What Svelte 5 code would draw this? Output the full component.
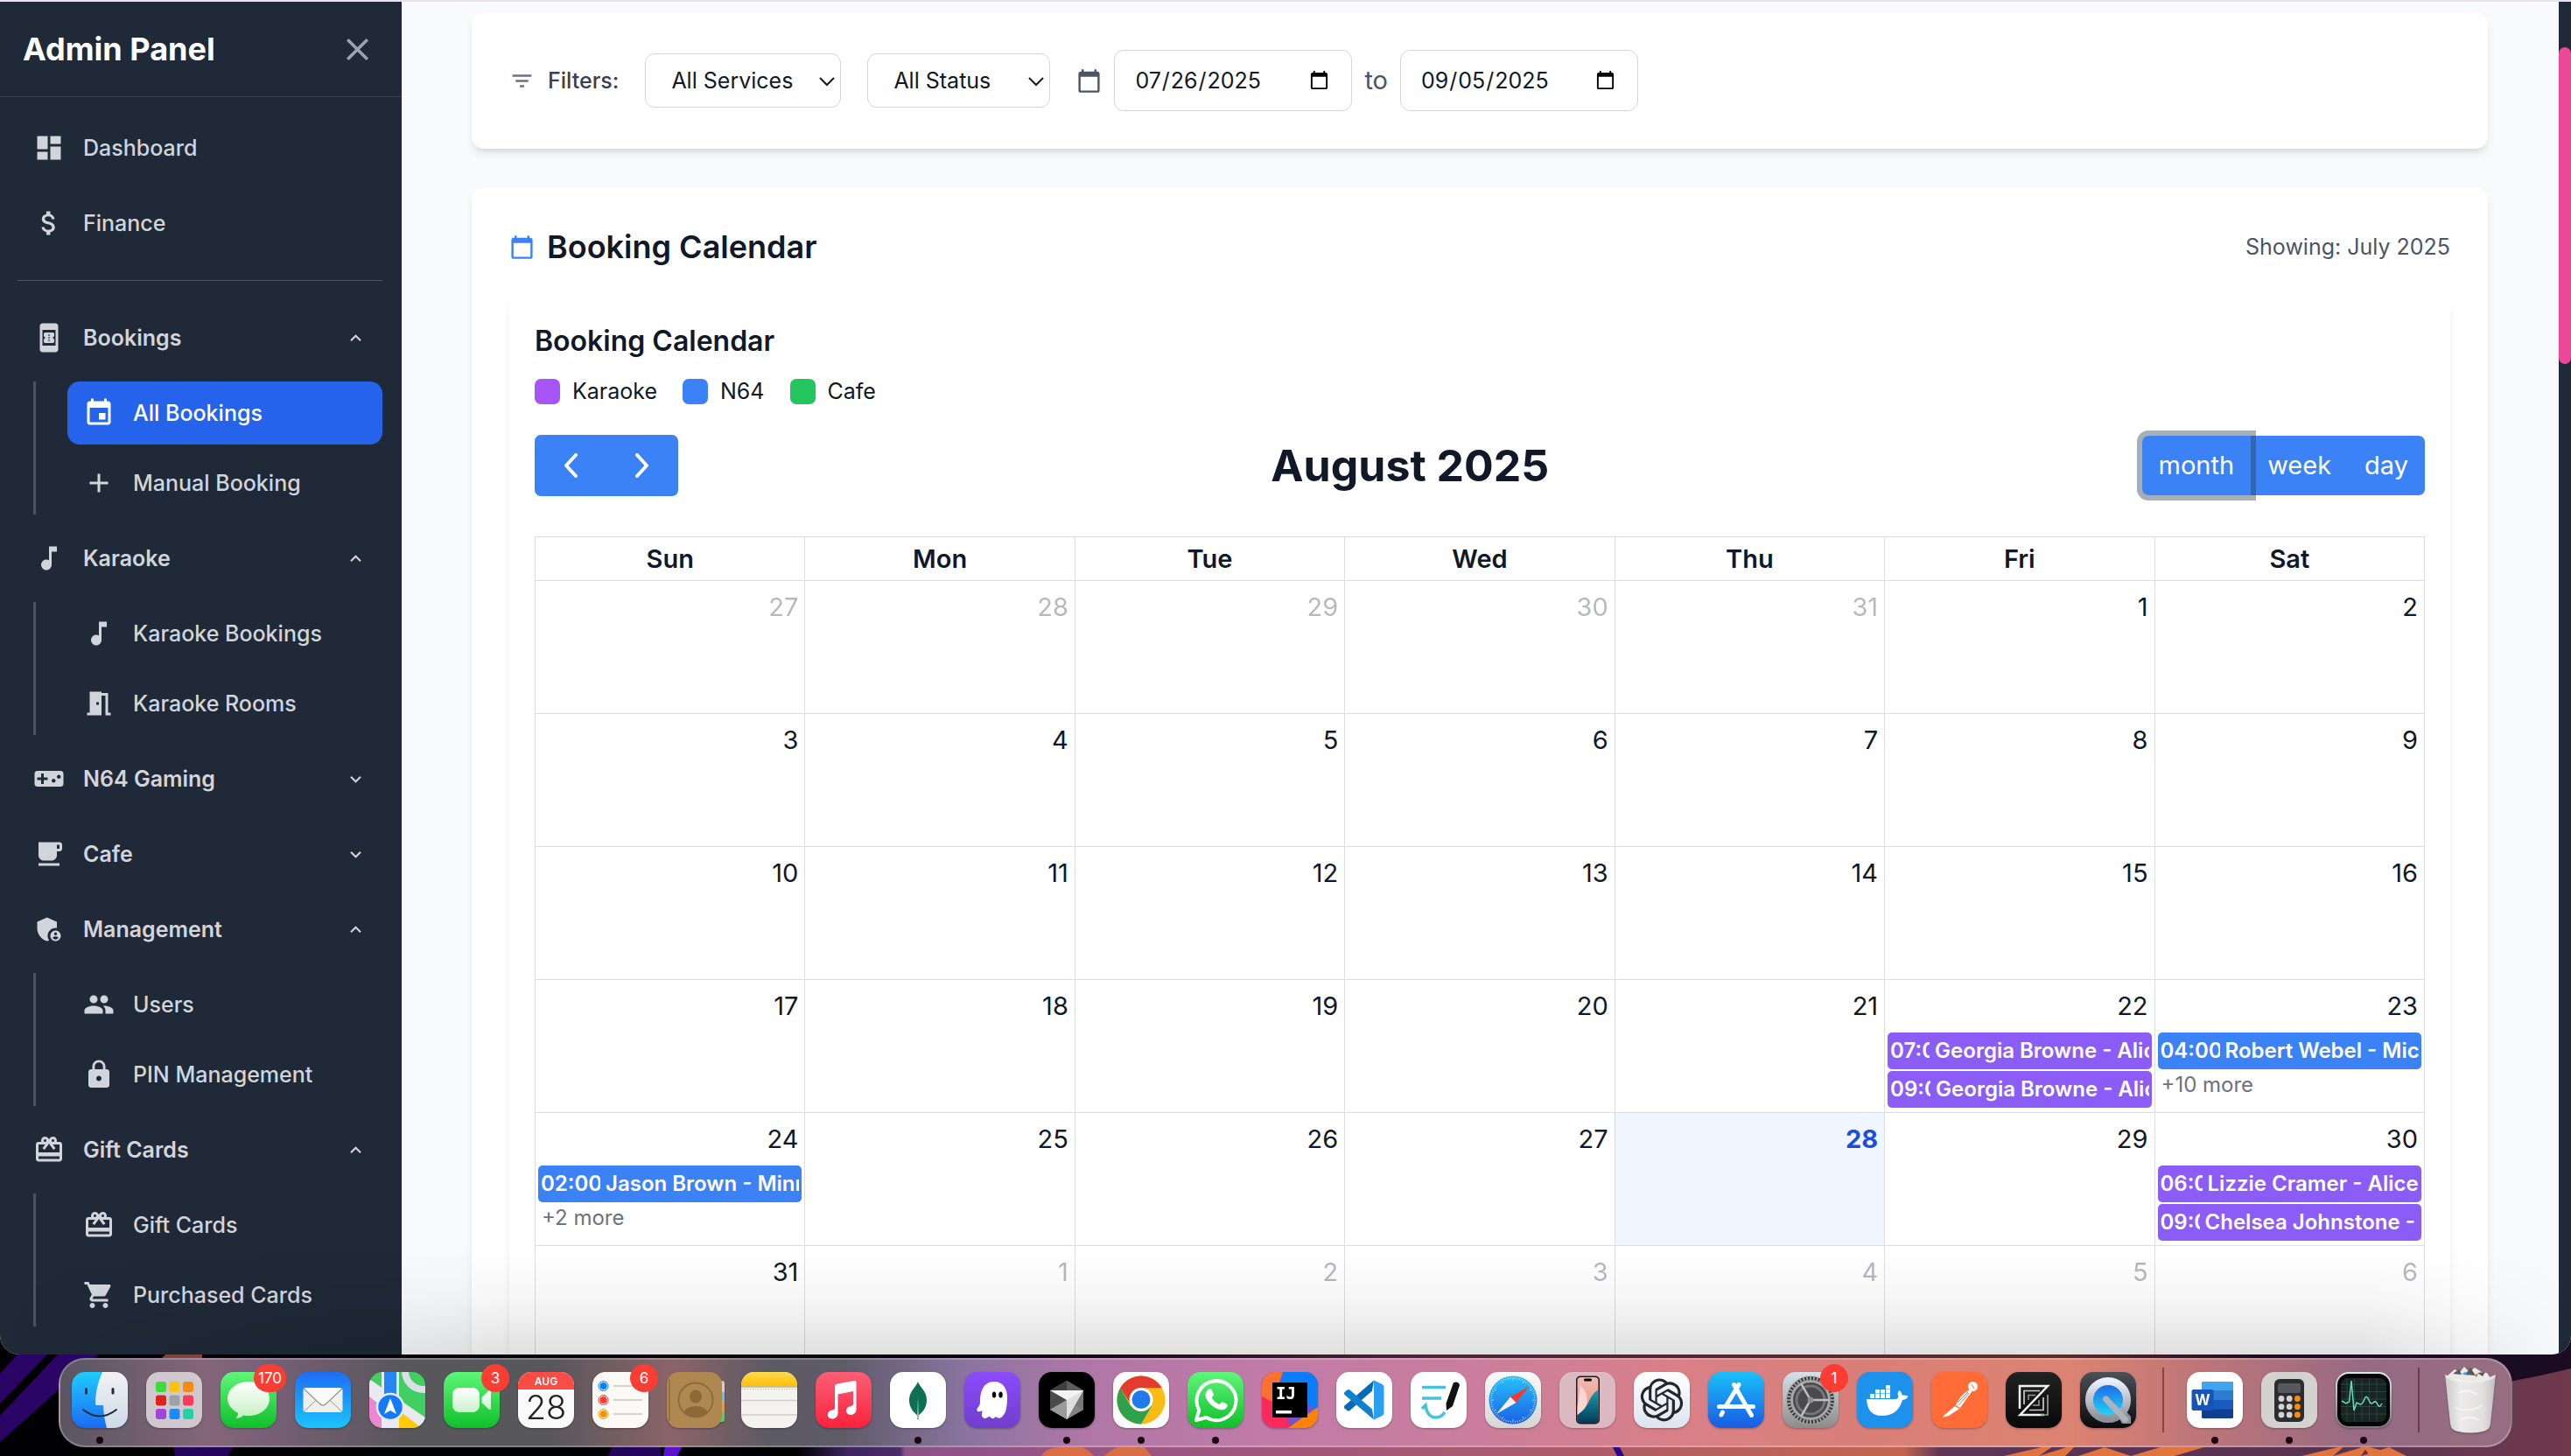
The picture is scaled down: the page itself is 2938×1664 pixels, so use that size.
<script>
  const paths = {
    dashboard: 'M3 13h8V3H3v10zm0 8h8v-6H3v6zm10 0h8V11h-8v10zm0-18v6h8V3h-8z',
    money: 'M11.8 10.9c-2.27-.59-3-1.2-3-2.15 0-1.09 1.01-1.85 2.7-1.85 1.78 0 2.44.85 2.5 2.1h2.21c-.07-1.72-1.12-3.3-3.21-3.81V3h-3v2.16c-1.94.42-3.5 1.68-3.5 3.61 0 2.31 1.91 3.46 4.7 4.13 2.5.6 3 1.48 3 2.41 0 .69-.49 1.79-2.7 1.79-2.06 0-2.87-.92-2.98-2.1h-2.2c.12 2.19 1.76 3.42 3.68 3.83V21h3v-2.15c1.95-.37 3.5-1.5 3.5-3.55 0-2.84-2.43-3.81-4.7-4.4z',
    bookOnline: 'M17 1H7c-1.1 0-2 .9-2 2v18c0 1.1.9 2 2 2h10c1.1 0 2-.9 2-2V3c0-1.1-.9-2-2-2zM7 18V6h10v12H7zM16 11V9.14C16 8.51 15.55 8 15 8H9c-.55 0-1 .51-1 1.14V11c.55 0 1 .45 1 1s-.45 1-1 1v1.86c0 .63.45 1.14 1 1.14h6c.55 0 1-.51 1-1.14V13c-.55 0-1-.45-1-1s.45-1 1-1zm-3.5 3.5h-1v-1h1v1zm0-2h-1v-1h1v1zm0-2h-1v-1h1v1z',
    event: 'M17 12h-5v5h5v-5zM16 1v2H8V1H6v2H5c-1.11 0-1.99.9-1.99 2L3 19c0 1.1.89 2 2 2h14c1.1 0 2-.9 2-2V5c0-1.1-.9-2-2-2h-1V1h-2zm3 18H5V8h14v11z',
    add: 'M19 13h-6v6h-2v-6H5v-2h6V5h2v6h6v2z',
    note: 'M12 3v10.55c-.59-.34-1.27-.55-2-.55-2.21 0-4 1.79-4 4s1.79 4 4 4 4-1.79 4-4V7h4V3h-6z',
    room: 'M14 6v15H3v-2h2V3h9v1h5v15h2v2h-4V6h-3zm-4 5v2h2v-2h-2z',
    game: 'M21 6H3c-1.1 0-2 .9-2 2v8c0 1.1.9 2 2 2h18c1.1 0 2-.9 2-2V8c0-1.1-.9-2-2-2zm-10 7H8v3H6v-3H3v-2h3V8h2v3h3v2zm4.5 2c-.83 0-1.5-.67-1.5-1.5s.67-1.5 1.5-1.5 1.5.67 1.5 1.5-.67 1.5-1.5 1.5zm4-3c-.83 0-1.5-.67-1.5-1.5S18.67 9 19.5 9s1.5.67 1.5 1.5-.67 1.5-1.5 1.5z',
    cafe: 'M20 3H4v10c0 2.21 1.79 4 4 4h6c2.21 0 4-1.79 4-4v-3h2c1.11 0 2-.9 2-2V5c0-1.11-.89-2-2-2zm0 5h-2V5h2v3zM4 19h16v2H4z',
    admin: 'M17 11c.34 0 .67.04 1 .09V6.27L10.5 3 3 6.27v4.91c0 4.54 3.2 8.79 7.5 9.82.55-.13 1.08-.32 1.6-.55-.69-.98-1.1-2.17-1.1-3.45 0-3.31 2.69-6 6-6zM17 13c-2.21 0-4 1.79-4 4s1.79 4 4 4 4-1.79 4-4-1.79-4-4-4zm0 1.38c.62 0 1.12.51 1.12 1.12s-.51 1.12-1.12 1.12-1.12-.51-1.12-1.12.5-1.12 1.12-1.12zm0 5.37c-.93 0-1.74-.46-2.24-1.17.05-.72 1.51-1.08 2.24-1.08s2.19.36 2.24 1.08c-.5.71-1.31 1.17-2.24 1.17z',
    people: 'M16 11c1.66 0 2.99-1.34 2.99-3S17.66 5 16 5c-1.66 0-3 1.34-3 3s1.34 3 3 3zm-8 0c1.66 0 2.99-1.34 2.99-3S9.66 5 8 5C6.34 5 5 6.34 5 8s1.34 3 3 3zm0 2c-2.33 0-7 1.17-7 3.5V19h14v-2.5c0-2.33-4.67-3.5-7-3.5zm8 0c-.29 0-.62.02-.97.05 1.16.84 1.97 1.97 1.97 3.45V19h6v-2.5c0-2.33-4.67-3.5-7-3.5z',
    lock: 'M18 8h-1V6c0-2.76-2.24-5-5-5S7 3.24 7 6v2H6c-1.1 0-2 .9-2 2v10c0 1.1.9 2 2 2h12c1.1 0 2-.9 2-2V10c0-1.1-.9-2-2-2zm-6 9c-1.1 0-2-.9-2-2s.9-2 2-2 2 .9 2 2-.9 2-2 2zm3.1-9H8.9V6c0-1.71 1.39-3.1 3.1-3.1 1.71 0 3.1 1.39 3.1 3.1v2z',
    gift: 'M20 6h-2.18c.11-.31.18-.65.18-1 0-1.66-1.34-3-3-3-1.05 0-1.96.54-2.5 1.35l-.5.67-.5-.68C10.96 2.54 10.05 2 9 2 7.34 2 6 3.34 6 5c0 .35.07.69.18 1H4c-1.11 0-1.99.89-1.99 2L2 19c0 1.11.89 2 2 2h16c1.11 0 2-.89 2-2V8c0-1.11-.89-2-2-2zm-5-2c.55 0 1 .45 1 1s-.45 1-1 1-1-.45-1-1 .45-1 1-1zM9 4c.55 0 1 .45 1 1s-.45 1-1 1-1-.45-1-1 .45-1 1-1zm11 15H4v-2h16v2zm0-5H4V8h5.08L7 10.83 8.62 12 11 8.76l1-1.36 1 1.36L15.38 12 17 10.83 14.92 8H20v6z',
    cart: 'M7 18c-1.1 0-1.99.9-1.99 2S5.9 22 7 22s2-.9 2-2-.9-2-2-2zM1 2v2h2l3.6 7.59-1.35 2.45c-.16.28-.25.61-.25.96 0 1.1.9 2 2 2h12v-2H7.42c-.14 0-.25-.11-.25-.25l.03-.12.9-1.63h7.45c.75 0 1.41-.41 1.75-1.03l3.58-6.49c.08-.14.12-.31.12-.48 0-.55-.45-1-1-1H5.21l-.94-2H1zm16 16c-1.1 0-1.99.9-1.99 2s.89 2 1.99 2 2-.9 2-2-.9-2-2-2z',
    less: 'M12 8l-6 6 1.41 1.41L12 10.83l4.59 4.58L18 14z',
    more: 'M16.59 8.59L12 13.17 7.41 8.59 6 10l6 6 6-6z',
    close: 'M19 6.41L17.59 5 12 10.59 6.41 5 5 6.41 10.59 12 5 17.59 6.41 19 12 13.41 17.59 19 19 17.59 13.41 12z',
    filter: 'M10 18h4v-2h-4v2zM3 6v2h18V6H3zm3 7h12v-2H6v2z',
    calendar: 'M20 3h-1V1h-2v2H7V1H5v2H4c-1.1 0-2 .9-2 2v16c0 1.1.9 2 2 2h16c1.1 0 2-.9 2-2V5c0-1.1-.9-2-2-2zm0 18H4V8h16v13z'
  };

  let groups = $state([
    { label: 'Bookings', icon: 'bookOnline', open: true, items: [
      { label: 'All Bookings', icon: 'event', active: true },
      { label: 'Manual Booking', icon: 'add' }
    ] },
    { label: 'Karaoke', icon: 'note', open: true, items: [
      { label: 'Karaoke Bookings', icon: 'note' },
      { label: 'Karaoke Rooms', icon: 'room' }
    ] },
    { label: 'N64 Gaming', icon: 'game', open: false, items: [] },
    { label: 'Cafe', icon: 'cafe', open: false, items: [] },
    { label: 'Management', icon: 'admin', open: true, items: [
      { label: 'Users', icon: 'people' },
      { label: 'PIN Management', icon: 'lock' }
    ] },
    { label: 'Gift Cards', icon: 'gift', open: true, items: [
      { label: 'Gift Cards', icon: 'gift' },
      { label: 'Purchased Cards', icon: 'cart' }
    ] }
  ]);

  const weekdays = ['Sun', 'Mon', 'Tue', 'Wed', 'Thu', 'Fri', 'Sat'];

  // Events by day of August; `w` is the visible width of the start time.
  const events = {
    22: { list: [
      { time: '07:00', w: 45, title: 'Georgia Browne - Alice', kind: 'karaoke' },
      { time: '09:00', w: 46, title: 'Georgia Browne - Alice', kind: 'karaoke' }
    ] },
    23: { list: [{ time: '04:00', w: 68, title: 'Robert Webel - Mickey', kind: 'n64' }], more: 10 },
    24: { list: [{ time: '02:00', w: 68, title: 'Jason Brown - Minnie', kind: 'n64' }], more: 2 },
    30: { list: [
      { time: '06:00', w: 48, title: 'Lizzie Cramer - Alice', kind: 'karaoke' },
      { time: '09:00', w: 45, title: 'Chelsea Johnstone - Alice', kind: 'karaoke' }
    ] }
  };

  const weeks = Array.from({ length: 6 }, (_, r) =>
    Array.from({ length: 7 }, (_, c) => {
      const d = new Date(2025, 6, 27 + r * 7 + c);
      const inMonth = d.getMonth() === 7;
      const n = d.getDate();
      return { n, inMonth, today: inMonth && n === 28, ev: inMonth ? events[n] : undefined };
    })
  );

  const lin = (id, a, b) =>
    `<linearGradient id="${id}" x1="0" y1="0" x2="0" y2="1"><stop offset="0" stop-color="${a}"/><stop offset="1" stop-color="${b}"/></linearGradient>`;
  const tile = (fill) => `<rect width="64" height="64" rx="15" fill="${fill}"/>`;
  const clip = (id) => `<clipPath id="${id}"><rect width="64" height="64" rx="15"/></clipPath>`;

  const launch = ['#3ddc3a', '#fdc20f', '#f58b12', '#e0201c', '#9aa3a8', '#fb3a5a', '#a245d8', '#1a8cff', '#27cfa4'];
  const ticks = Array.from({ length: 60 }, (_, i) =>
    `<path d="M32 6v${i % 5 ? 2 : 4}" transform="rotate(${i * 6} 32 32)"/>`).join('');
  const teeth = Array.from({ length: 40 }, (_, i) =>
    `<path d="M32 4v5" transform="rotate(${i * 9} 32 32)"/>`).join('');

  const art = {
    finder: `<defs>${lin('fa', '#1fcbff', '#1b6cf2')}${lin('fb', '#f1f1f4', '#cfdae8')}${clip('fc')}</defs><g clip-path="url(#fc)"><rect width="64" height="64" fill="url(#fa)"/><path d="M35 0C30 11 27 24 27 36.500q0 1.500 1.500 1.500H36Q36.500 52 40 64H64V0z" fill="url(#fb)"/></g><g stroke="#1c2a3a" fill="none" stroke-linecap="round"><path d="M16.500 19.500v4.500M47 19.500v4.500" stroke-width="3"/><path d="M13 43Q32 58 51 43" stroke-width="2"/></g>`,
    launchpad: tile('#cfc8ce') + launch.map((c, i) => `<rect x="${11 + (i % 3) * 15.500}" y="${11 + Math.floor(i / 3) * 15.500}" width="12" height="12" rx="3" fill="${c}"/>`).join(''),
    messages: `<defs>${lin('ma', '#5ff67a', '#10bf2a')}${lin('mb', '#ffffff', '#c5efc4')}</defs>${tile('url(#ma)')}<path d="M32 11c13.500 0 24 8.500 24 19.500S45.500 50 32 50c-2 0-4-.2-6-.6-2 2-5 3.400-8.500 3.600 1.800-1.800 2.600-4 2.500-6C13 43 8 37.500 8 30.500 8 19.500 18.500 11 32 11z" fill="url(#mb)"/>`,
    mail: `<defs>${lin('mla', '#1e6ef4', '#1bc4fd')}</defs>${tile('url(#mla)')}<rect x="9.500" y="18" width="45" height="28" rx="3" fill="#f1efec"/><path d="M10 45.500l17-16M54 45.500l-17-16" stroke="#9a9a9a" stroke-width="1"/><path d="M10 19l18 17q4 4 8 0l18-17" fill="#fafafa" stroke="#999" stroke-width="1.200"/>`,
    maps: `<defs>${clip('mpc')}</defs><g clip-path="url(#mpc)"><rect width="64" height="64" fill="#42cf62"/><path d="M0 26L30 64H0z" fill="#ee86cf"/><path d="M0 8l64 44v12H44L0 28z" fill="#e9eaf1"/><path d="M34 44l26 20H34z" fill="#fecb0c"/><path d="M14 0h20v64H14z" fill="#e9eaf1"/><path d="M17 0h14v34H17z" fill="#2686f8"/><circle cx="62" cy="-1" r="21" fill="none" stroke="#dcdfe8" stroke-width="8"/><path d="M0 9l14 10v14L0 22z" fill="#e9eaf1"/></g><circle cx="24" cy="40" r="15" fill="#1479fb" stroke="#e3ecfa" stroke-width="2.500"/><path d="M24 30l7 18-7-4-7 4z" fill="#fff"/>`,
    facetime: `<defs>${lin('fta', '#5cf777', '#10bf2b')}${lin('ftb', '#ffffff', '#c9f2cb')}</defs>${tile('url(#fta)')}<rect x="10" y="18" width="31" height="28" rx="8" fill="url(#ftb)"/><path d="M43.500 29l8-7.500q2.500-1.500 2.500 1.500v18q0 3-2.500 1.500l-8-7.500z" fill="url(#ftb)"/>`,
    calendar: `<defs>${clip('cac')}</defs><g clip-path="url(#cac)"><rect width="64" height="64" fill="#fafafa"/><rect width="64" height="20" fill="#fb4d45"/></g><text x="32" y="15" font-size="12" font-weight="600" fill="#fff" text-anchor="middle" font-family="Inter, sans-serif">AUG</text><text x="32" y="54" font-size="38" font-weight="300" fill="#222" text-anchor="middle" font-family="Inter, sans-serif">28</text>`,
    reminders: tile('#fbfaf7') + [['#0a7cff', 16], ['#fb3b30', 32], ['#f79309', 48]].map(([c, y]) => `<circle cx="12.500" cy="${y}" r="4" fill="${c}"/><circle cx="12.500" cy="${y}" r="5.500" fill="none" stroke="${c}" stroke-width="1"/><path d="M24 ${y}h33" stroke="#c5c5c5" stroke-width="1.500"/>`).join(''),
    contacts: `<path d="M58 10h5q3 0 3 3v10h-8z" fill="#cfcfd0"/><path d="M58 23h8v11h-8z" fill="#5fc2f2"/><path d="M58 34h8v11h-8z" fill="#f79a1c"/><path d="M58 45h8v9q0 3-3 3h-5z" fill="#52d167"/><rect width="63" height="64" rx="14" fill="#ae8850"/><path d="M3 8v48" stroke="#8f6d3a" stroke-width="1.500"/><circle cx="33" cy="32" r="19.500" fill="none" stroke="#8c6a38" stroke-width="1.800"/><ellipse cx="33" cy="28" rx="7" ry="7.500" fill="#8c6a38"/><path d="M19 46q4-7 14-7t14 7q-6 6-14 6t-14-6z" fill="#8c6a38"/>`,
    notes: `<defs>${clip('nc')}${lin('na', '#ffd94f', '#fdc005')}</defs><g clip-path="url(#nc)"><rect width="64" height="64" fill="#f4f3ef"/><rect width="64" height="16.500" fill="url(#na)"/><path d="M0 17h64" stroke="#9d9a8c"/><path d="M1 19.500h64" stroke="#b5b2a8" stroke-dasharray="1 2"/><path d="M0 32.500h64M0 49h64" stroke="#cfcfcf" stroke-width="1.500"/></g>`,
    music: `<defs>${lin('mua', '#fb5f76', '#fa223c')}</defs>${tile('url(#mua)')}<path d="M22 16.500q0-2.500 2.500-3L44 10q2.500-.4 2.500 2v30.500c0 4-3 6.500-6.500 6.500-3 0-5-2-5-4.700 0-3 2-4.600 5-5.300 2.500-.6 3-1 3-3V22l-17.500 3.500V47c0 4-3 6.500-6.700 6.500-3 0-5-2-5-4.700 0-3 2-4.600 5-5.300 2.700-.6 3.200-1 3.200-3z" fill="#fff"/>`,
    mongo: tile('#fff') + `<path d="M32 11c2 6 10 11 10 21 0 9-5 14-8.800 17l-.6 5h-1.200l-.6-5C27 46 22 41 22 32c0-10 8-15 10-21z" fill="#0b7150"/><path d="M32 28l.8 25h-1.600z" fill="#c9d6c9"/>`,
    ghost: `<defs>${lin('ga', '#8c4bfd', '#713ecb')}</defs>${tile('url(#ga)')}<path d="M34 11c10 0 15 8 15 18 0 9-1 16-4 20-2 3-5 5-7.500 3-1.500-1-2-1-3 .2-1.600 1.800-3.600 1-4.600-.4-1-1.400-1.700-1.200-3 0C24 54 20 53 20 49q0-2 .6-5c-2 1.500-6 2-6.300-.8C14 41 18 40 18 34c0-12 4-23 16-23z" fill="#fff"/><ellipse cx="34" cy="26" rx="2.200" ry="3.500"/><ellipse cx="41.500" cy="26" rx="2.200" ry="3.500"/>`,
    cursor: tile('#000') + `<path d="M32 10l19 11v22L32 54 13 43V21z" fill="#777"/><path d="M32 10l19 11H13z" fill="#5d5d5d"/><path d="M32 10v11H13z" fill="#3f3f3f"/><path d="M13 21v22l19-11z" fill="#4a4a4a"/><path d="M13 43l19-11v22z" fill="#9a9a9a"/><path d="M51 43L32 54V32z" fill="#828282"/><path d="M13 21h38L32 54V32z" fill="#f4f4f4"/><path d="M51 21L32 54V32z" fill="#dedede"/>`,
    chrome: tile('#fdfdfd') + `<circle cx="32" cy="32" r="27.500" fill="#f9bc15"/><path d="M8.200 18.200A27.500 27.500 0 0 0 32 59.500L44 39 20 39z" fill="#2da14c"/><path d="M8.200 18.200A27.500 27.500 0 0 1 55.800 18.200H32L21 38z" fill="#e33b2e"/><circle cx="32" cy="31.500" r="13.500" fill="#fff"/><circle cx="32" cy="31.500" r="10.500" fill="#2279ec"/>`,
    whatsapp: `<defs>${lin('wa', '#5ff67a', '#10bf2a')}</defs>${tile('url(#wa)')}<path d="M10 55l3.300-11.500A22.500 22.500 0 1 1 21.500 52z" fill="none" stroke="#fff" stroke-width="4" stroke-linejoin="round"/><path d="M24 20c1.500-1 3-1 3.800.8l2 4.500c.5 1.200-1.600 3.200-2 4 1.800 3.600 4.500 6 8.500 7.700 1-.6 2.600-3.300 3.800-2.800l4.700 2.200c1.400.8 1 3.200-.3 4.600-2.500 2.500-6 3-10 1.300-6-2.400-10.500-6.800-13-12-1.700-3.700-1-8 2.500-10.300z" fill="#fff"/>`,
    intellij: `<defs>${clip('ic')}</defs><g clip-path="url(#ic)"><rect width="64" height="64" fill="#7a52c8"/><path d="M0 0h24L10 40H0z" fill="#fb7132"/><path d="M24 0h40v44L20 20z" fill="#0a7dfb"/><path d="M0 28l20 10 14 26H0z" fill="#fb2a5c"/><path d="M64 40v24H30z" fill="#fb8306"/></g><rect x="12" y="12" width="40" height="40"/><text x="16" y="31" font-size="19" font-weight="700" fill="#fff" font-family="'DejaVu Sans Mono', monospace">IJ</text><rect x="16" y="44" width="18" height="3.500" fill="#fff"/>`,
    vscode: tile('#fff') + `<path d="M43 9.500l-2 12L15.500 44q-1.500 1-3 0L9.500 41.500q-1.300-1.500 0-3z" fill="#0a69b5"/><path d="M43 54.500l-2-12L15.500 20.500q-1.500-1-3 0L9.500 23q-1.300 1.500 0 3z" fill="#0f80cc"/><path d="M43 9.500l9.500 4.500q2 1 2 3v30q0 2-2 3L43 54.500z" fill="#2a9ff0"/>`,
    goodnotes: tile('#fff') + `<path d="M13 17.500h27M13 30h22M13 42l4-4q2 14 12 14 6 0 10-6" fill="none" stroke="#49c0dc" stroke-width="3.500"/><path d="M49 12q6-2 7 3l-8 24-7 5-.5-8z" fill="#111"/>`,
    safari: `<defs>${lin('sa', '#fafafa', '#d5d5d5')}${lin('sb', '#25c2f9', '#1b60e4')}</defs>${tile('url(#sa)')}<circle cx="32" cy="32" r="27.500" fill="url(#sb)"/><g stroke="#d5ecfb" stroke-width=".7">${ticks}</g><path d="M51 16L35.500 35 29 28.500z" fill="#f8382f"/><path d="M13 48l16-19.500L35.500 35z" fill="#f2f2f2"/>`,
    iphone: `<defs>${lin('pa', '#eebdb0', '#f2857a')}${lin('pb', '#1ba0b3', '#033a58')}</defs><rect width="64" height="64" rx="15" fill="#e6c9cf" opacity=".85"/><rect x="19" y="4.500" width="27" height="55" rx="5" fill="#171b22"/><rect x="20.500" y="6" width="24" height="52" rx="4" fill="url(#pa)"/><path d="M44.500 20Q38 24 34 33t-13.500 16V54q0 4 4 4h16q4 0 4-4z" fill="url(#pb)"/><path d="M24 16q10 8 7 22-3 6-10.500 11V40z" fill="#f7d7d3"/><rect x="28" y="7.500" width="9" height="3" rx="1.500"/>`,
    chatgpt: `<defs>${lin('gp', '#ffffff', '#dde4f0')}</defs>${tile('url(#gp)')}<path transform="translate(7.500 7.500) scale(2.040)" fill="#23262b" d="M22.2819 9.8211a5.9847 5.9847 0 0 0-.5157-4.9108 6.0462 6.0462 0 0 0-6.5098-2.9A6.0651 6.0651 0 0 0 4.9807 4.1818a5.9847 5.9847 0 0 0-3.9977 2.9 6.0462 6.0462 0 0 0 .7427 7.0966 5.98 5.98 0 0 0 .511 4.9107 6.051 6.051 0 0 0 6.5146 2.9001A5.9847 5.9847 0 0 0 13.2599 24a6.0557 6.0557 0 0 0 5.7718-4.2058 5.9894 5.9894 0 0 0 3.9977-2.9001 6.0557 6.0557 0 0 0-.7475-7.0729zm-9.022 12.6081a4.4755 4.4755 0 0 1-2.8764-1.0408l.1419-.0804 4.7783-2.7582a.7948.7948 0 0 0 .3927-.6813v-6.7369l2.02 1.1686a.071.071 0 0 1 .038.052v5.5826a4.504 4.504 0 0 1-4.4945 4.4944zm-9.6607-4.1254a4.4708 4.4708 0 0 1-.5346-3.0137l.142.0852 4.783 2.7582a.7712.7712 0 0 0 .7806 0l5.8428-3.3685v2.3324a.0804.0804 0 0 1-.0332.0615L9.74 19.9502a4.4992 4.4992 0 0 1-6.1408-1.6464zM2.3408 7.8956a4.485 4.485 0 0 1 2.3655-1.9728V11.6a.7664.7664 0 0 0 .3879.6765l5.8144 3.3543-2.0201 1.1685a.0757.0757 0 0 1-.071 0l-4.8303-2.7865A4.504 4.504 0 0 1 2.3408 7.872zm16.5963 3.8558L13.1038 8.364 15.1192 7.2a.0757.0757 0 0 1 .071 0l4.8303 2.7913a4.4944 4.4944 0 0 1-.6765 8.1042v-5.6772a.79.79 0 0 0-.407-.667zm2.0107-3.0231l-.142-.0852-4.7735-2.7818a.7759.7759 0 0 0-.7854 0L9.409 9.2297V6.8974a.0662.0662 0 0 1 .0284-.0615l4.8303-2.7866a4.4992 4.4992 0 0 1 6.6802 4.66zM8.3065 12.863l-2.02-1.1638a.0804.0804 0 0 1-.038-.0567V6.0742a4.4992 4.4992 0 0 1 7.3757-3.4537l-.142.0805L8.704 5.459a.7948.7948 0 0 0-.3927.6813zm1.0976-2.3654l2.602-1.4998 2.6069 1.4998v2.9994l-2.5974 1.4997-2.6067-1.4997Z"/>`,
    appstore: `<defs>${lin('aa', '#19c1fa', '#1a5be3')}</defs>${tile('url(#aa)')}<g stroke="#fff" stroke-width="5" stroke-linecap="round"><path d="M35 14.500L20 39.500M29.500 14.500l20 35M12.500 39.500h39M16.500 46l-1.500 3"/></g>`,
    settings: `<defs>${lin('sea', '#d3e2ea', '#8c8b89')}</defs>${tile('url(#sea)')}<circle cx="32" cy="32" r="27" fill="#3b3b3d"/><g stroke="#a3a3a4" stroke-width="1.800">${teeth}</g><circle cx="32" cy="32" r="21.500" fill="#4a4a4c" stroke="#a9a9aa" stroke-width="3"/><circle cx="32" cy="32" r="16" fill="none" stroke="#77777a" stroke-width="3"/><g stroke="#c0c0c1" stroke-width="2.500"><path d="M32 32h21M32 32L21.500 13.800M32 32L21.500 50.200"/></g><circle cx="32" cy="32" r="3.500" fill="#8d8d8f"/>`,
    docker: tile('#1d91ec') + `<path d="M11 31h34q2-1 2.500-3-2-3.500.5-7 3.500 2 3.500 5.500 3.500-.5 7 1-1.500 4-6.500 4.500Q47 50 28 50 12 50 11 31z" fill="#fff"/><g fill="#fff"><path d="M15 25h5v5h-5zM21 25h5v5h-5zM27 25h5v5h-5zM33 25h5v5h-5zM21 20h5v4.500h-5zM27 20h5v4.500h-5zM33 20h5v4.500h-5zM33 15h5v4.500h-5z"/></g>`,
    postman: tile('#ff6c37') + `<circle cx="47.500" cy="16.500" r="5.500" fill="#fff"/><path d="M44 20l2.500 2L33 41l-5-3q4-11 16-18z" fill="#fff"/><path d="M27 39l5 3-12 8-7 2 2-3z" fill="#fff"/><path d="M30 35l12-12M31 38l12-14M46 14l3 5" stroke="#ff6c37"/>`,
    zed: `<defs>${lin('za', '#222', '#090909')}</defs>${tile('url(#za)')}<g fill="none" stroke="#f2f2f2" stroke-width="2.500"><path d="M16 42V16h32L16.500 49H44"/><path d="M48 26v23H40" stroke-width="1.700" stroke="#999"/><path d="M21 37V21.500h18M27 43.500h16V29" stroke-width="1.700" stroke="#ccc"/><path d="M26 32v-5.500h8M31 38h7v-6" stroke-width="1.500" stroke="#999"/></g>`,
    quicktime: `<defs>${lin('qa', '#4b5158', '#090a0c')}${lin('qb', '#e9effc', '#8d9099')}${lin('qc', '#1a5fe0', '#25e0fb')}</defs>${tile('url(#qa)')}<path d="M40 44l10-2 8 9v8H48z" fill="#8d9099"/><circle cx="32" cy="32" r="21.500" fill="url(#qc)" stroke="url(#qb)" stroke-width="9"/><path d="M29.500 31l22 23" stroke="#aeb2ba" stroke-width="7" stroke-linecap="round"/>`,
    word: tile('#fff') + `<rect x="17" y="11" width="36" height="42" rx="2" fill="#1a5dbe"/><path d="M17 13q0-2 2-2h32q2 0 2 2v8.500H17z" fill="#41a5ee"/><path d="M17 21.500h36V32H17z" fill="#2b7cd3"/><path d="M17 32h36v10.500H17z" fill="#185abd"/><path d="M17 42.500h36V51q0 2-2 2H19q-2 0-2-2z" fill="#103f91"/><rect x="5.500" y="20" width="25" height="24" rx="2" fill="#1753b8"/><text x="18" y="38" font-size="17" font-weight="700" fill="#fff" text-anchor="middle" font-family="'Open Sans', sans-serif">W</text>`,
    calculator: tile('#d3d2cf') + `<rect x="15" y="8" width="34" height="49" rx="6" fill="#2c2d31"/><rect x="19" y="13" width="26" height="11" rx="2.500" fill="#57585c"/>` + [0, 1, 2].map((r) => [0, 1, 2].map((c) => `<circle cx="${23 + c * 9.200}" cy="${30.500 + r * 9.200}" r="3.400" fill="${c === 2 ? '#fb8c0c' : '#d2d2d3'}"/>`).join('')).join(''),
    activity: `<defs>${lin('acb', '#dbe9ef', '#77787a')}</defs>${tile('url(#acb)')}<rect x="2" y="2" width="60" height="60" rx="13" fill="#050505"/><rect x="6" y="7" width="52" height="50" rx="7" fill="#172421"/><path d="M13 7v50M21.500 7v50M30 7v50M38.500 7v50M47 7v50M6 14h52M6 22.500h52M6 31h52M6 39.500h52M6 48h52" stroke="#33514a" stroke-width=".7"/><path d="M7 33l5 3 3.500-2 2.500-24 3 34 3-9 4 2q3 0 5-6t5 1q2 6 5 3t5 2 5-1" fill="none" stroke="#66dcbd" stroke-width="1.500"/>`,
    trash: `<defs><linearGradient id="ta"><stop offset="0" stop-color="#c9c9cb"/><stop offset=".3" stop-color="#ecebeb"/><stop offset=".75" stop-color="#e2e0df"/><stop offset="1" stop-color="#bdbcbf"/></linearGradient></defs><path d="M6 4l8-7 6 3 5-6 6 6 6-5 8 5 6 1 4 6q-24 8-49 0z" fill="#e9e9e7"/><path d="M12 2l7-5 3 6zM26 3l6-8 6 9zM40 1l9-1-3 5z" fill="#55585c"/><path d="M22 2l5-2 2 4z" fill="#3b9ae0"/><path d="M36 3l5-1-2 4z" fill="#d2753d"/><path d="M3 3q29 14 58 0l-6 56q-1 8-9 9-14 3-28 0-8-1-9-9z" fill="url(#ta)"/><path d="M3 3q29 14 58 0-1 4-3 5-26 9-52 0-2-1-3-5z" fill="#f5f5f5" opacity=".6"/><path d="M18 24q10-6 22 2M14 40q14 8 32-2M22 54q10-5 20 1" stroke="#fff" stroke-width="2" fill="none" opacity=".6"/>`
  };

  const dock = [
    ['finder', 'Finder', { on: true }], ['launchpad', 'Launchpad'], ['messages', 'Messages', { badge: 170 }],
    ['mail', 'Mail'], ['maps', 'Maps'], ['facetime', 'FaceTime', { badge: 3 }], ['calendar', 'Calendar'],
    ['reminders', 'Reminders', { badge: 6 }], ['contacts', 'Contacts'], ['notes', 'Notes'], ['music', 'Music'],
    ['mongo', 'Compass', { on: true }], ['ghost', 'Ghost'], ['cursor', 'Cursor', { on: true }],
    ['chrome', 'Chrome', { on: true }], ['whatsapp', 'WhatsApp', { on: true }], ['intellij', 'IntelliJ IDEA'],
    ['vscode', 'Code'], ['goodnotes', 'Notes and ink'], ['safari', 'Safari'], ['iphone', 'iPhone Mirroring'],
    ['chatgpt', 'ChatGPT'], ['appstore', 'App Store'], ['settings', 'System Settings', { badge: 1 }],
    ['docker', 'Docker'], ['postman', 'Postman'], ['zed', 'Zed'], ['quicktime', 'QuickTime'], null,
    ['word', 'Word', { on: true }], ['calculator', 'Calculator', { on: true }],
    ['activity', 'Activity Monitor', { on: true }], null, ['trash', 'Trash']
  ];

  let from = $state('2025-07-26');
  let to = $state('2025-09-05');
</script>

{#snippet icon(name, cls = '')}
  <svg class="icon {cls}" viewBox="0 0 24 24" aria-hidden="true"><path fill-rule="evenodd" d={paths[name]} /></svg>
{/snippet}

<div class="desktop">
  <svg class="wallpaper" viewBox="0 0 2938 160" preserveAspectRatio="none" aria-hidden="true">
    <defs>
      <linearGradient id="wall">
        <stop offset="0" stop-color="#020104" /><stop offset=".31" stop-color="#020104" />
        <stop offset=".33" stop-color="#3d2560" /><stop offset=".35" stop-color="#4a2d68" />
        <stop offset=".352" stop-color="#8d5288" /><stop offset=".5" stop-color="#a2587c" />
        <stop offset=".6" stop-color="#a95a6c" /><stop offset=".74" stop-color="#c4664e" />
        <stop offset=".755" stop-color="#5d3555" /><stop offset=".9" stop-color="#583350" />
        <stop offset="1" stop-color="#70394c" />
      </linearGradient>
      <linearGradient id="wallTop">
        <stop offset="0" stop-color="#020104" /><stop offset=".4" stop-color="#0a050d" />
        <stop offset=".55" stop-color="#4a2438" /><stop offset=".8" stop-color="#582e2e" />
        <stop offset=".88" stop-color="#1c0c22" /><stop offset="1" stop-color="#1c0c22" />
      </linearGradient>
    </defs>
    <rect width="2938" height="160" fill="url(#wall)" />
    <path d="M0 0h2938v60q-120 30-240 30H0z" fill="url(#wallTop)" />
    <path d="M20 44h34L0 100V66zM66 44h46L0 144v-30z" fill="#2a0566" />
    <path d="M198 148h70l-8 12h-60zM700 148h55v12h-60z" fill="#24055c" />
    <path d="M183 50l8-8h40v8z" fill="#7d4537" />
    <path d="M760 148h20l-6 12h-16z" fill="#5a14d0" />
    <path d="M1190 160q6-10 20-10l8-4q20 0 32 14zM1262 160q14-16 46-10l8 10z" fill="#d96d45" />
    <path d="M1842 148h8l6 12h-8z" fill="#2d0585" />
    <path d="M2290 160l60-14-20 14 44-14-14 14zM2405 150l30 10 40-12h50l-40 12h-110zM2630 160l50-12-14 12 40-12-8 12 32-10 20 10zM2700 148l48 12h-40z" fill="#e0743f" />
  </svg>

  <div class="window">
    <aside class="sidebar">
      <header class="brand">
        <h1>Admin Panel</h1>
        <button class="plain" aria-label="Close sidebar">{@render icon('close', 'x')}</button>
      </header>
      <nav>
        <a class="row" href="#dashboard">{@render icon('dashboard')}Dashboard</a>
        <a class="row" href="#finance">{@render icon('money')}Finance</a>
        <hr />
        {#each groups as g}
          <button class="row head" aria-expanded={g.open} onclick={() => (g.open = !g.open)}>
            {@render icon(g.icon)}<span>{g.label}</span>{@render icon(g.open ? 'less' : 'more', 'caret')}
          </button>
          {#if g.open && g.items.length}
            <div class="children">
              {#each g.items as item}
                <a class="row" class:active={item.active} href="#{item.label}">{@render icon(item.icon)}{item.label}</a>
              {/each}
            </div>
          {/if}
        {/each}
      </nav>
    </aside>

    <main>
      <div class="content">
        <section class="card filters">
          <div class="label">{@render icon('filter', 'sm')}<span>Filters:</span></div>
          <span class="select services">
            <select aria-label="Service"><option>All Services</option></select>
            <svg viewBox="0 0 18 12" aria-hidden="true"><path d="M1 2l8 8 8-8" /></svg>
          </span>
          <span class="select status">
            <select aria-label="Status"><option>All Status</option></select>
            <svg viewBox="0 0 18 12" aria-hidden="true"><path d="M1 2l8 8 8-8" /></svg>
          </span>
          <div class="range">
            {@render icon('calendar', 'sm')}
            <input type="date" aria-label="From" bind:value={from} />
            <span>to</span>
            <input type="date" aria-label="To" bind:value={to} />
          </div>
        </section>

        <section class="card booking">
          <div class="cardhead">
            <h2>{@render icon('calendar', 'sm')}Booking Calendar</h2>
            <p>Showing: July 2025</p>
          </div>
          <div class="panel">
            <h3>Booking Calendar</h3>
            <ul class="legend">
              <li><i class="purple"></i>Karaoke</li>
              <li><i class="blue"></i>N64</li>
              <li><i class="green"></i>Cafe</li>
            </ul>
            <div class="toolbar">
              <div class="btns arrows">
                <button aria-label="Previous month"><svg viewBox="0 0 16 28"><path d="M14 2L3 14l11 12" /></svg></button>
                <button aria-label="Next month"><svg viewBox="0 0 16 28"><path d="M2 2l11 12L2 26" /></svg></button>
              </div>
              <h4>August 2025</h4>
              <div class="btns views">
                <button class="current">month</button><button>week</button><button>day</button>
              </div>
            </div>
            <table>
              <thead>
                <tr>{#each weekdays as d}<th scope="col">{d}</th>{/each}</tr>
              </thead>
              <tbody>
                {#each weeks as week}
                  <tr>
                    {#each week as day}
                      <td class:today={day.today}>
                        <div class="num" class:other={!day.inMonth}>{day.n}</div>
                        {#if day.ev}
                          {#each day.ev.list as e}
                            <a class="event {e.kind}" href="#booking">
                              <span class="time" style="width: {e.w}px">{e.time}</span>
                              <span class="title">{e.title}</span>
                            </a>
                          {/each}
                          {#if day.ev.more}<a class="more" href="#more">+{day.ev.more} more</a>{/if}
                        {/if}
                      </td>
                    {/each}
                  </tr>
                {/each}
              </tbody>
            </table>
          </div>
        </section>
      </div>
    </main>
    <div class="track"><div class="thumb"></div></div>
    <div class="shade"></div>
  </div>

  <footer class="dock">
    {#each dock as app}
      {#if app}
        <button class="app" class:on={app[2]?.on} aria-label={app[1]}>
          <svg viewBox="0 0 64 64">{@html art[app[0]]}</svg>
          {#if app[2]?.badge}<span class="badge">{app[2].badge}</span>{/if}
        </button>
      {:else}
        <span class="sep"></span>
      {/if}
    {/each}
  </footer>
</div>

<style>
  :global(body) { margin: 0; background: #020104; }
  .desktop, .desktop * { box-sizing: border-box; }
  .desktop {
    position: relative; display: grid; grid-template-rows: minmax(0, 1fr) auto; height: 100vh; overflow: hidden;
    font-family: Inter, 'Liberation Sans', sans-serif; font-size: 25px; line-height: 36px; color: #111827;
  }
  button, select, input { font: inherit; color: inherit; margin: 0; }
  button { cursor: pointer; border: 0; background: none; padding: 0; }
  a { color: inherit; text-decoration: none; }
  h1, h2, h3, h4, p, ul { margin: 0; padding: 0; font-weight: 400; font-size: inherit; }
  .wallpaper { position: absolute; left: 0; bottom: 0; width: 100%; height: 160px; }

  .window {
    position: relative; display: grid; grid-template-columns: 459px minmax(0, 1fr) 14px;
    border-top: 2px solid #e8e2ec; border-radius: 0 0 22px 22px; overflow: hidden; background: #f9fafb;
  }
  .icon { width: 36px; height: 36px; fill: currentColor; flex: none; display: block; }
  .icon.sm { width: 29px; height: 29px; }
  .icon.caret { width: 25px; height: 25px; }
  .icon.x { width: 43px; height: 43px; color: #9ca3af; }

  .sidebar { background: #1f2937; color: #d1d5db; overflow: hidden; }
  .brand { display: flex; align-items: center; justify-content: space-between; height: 109px; padding: 0 29px 0 26px; border-bottom: 1px solid #374151; }
  h1 { font-size: 36px; line-height: 50px; font-weight: 700; color: #fff; }
  nav { display: flex; flex-direction: column; gap: 14px; padding: 22px 22px 0 20px; }
  .row { display: flex; align-items: center; gap: 21px; height: 72px; padding: 0 18px; border-radius: 14px; font-weight: 500; text-align: left; }
  .head { font-weight: 600; }
  .head span { flex: 1; }
  hr { width: 100%; height: 1px; margin: 15px 0; border: 0; background: #4b5563; }
  .children { display: flex; flex-direction: column; gap: 8px; margin-left: 18px; padding-left: 36px; border-left: 3px solid #4b5563; }
  .active { background: #2563eb; color: #fff; }

  main { overflow: hidden; padding: 12px 1px 0 0; }
  .content { display: flex; flex-direction: column; gap: 44px; max-width: 2304px; margin: 0 auto; }
  .card { background: #fff; border-radius: 14px; padding: 43px; box-shadow: 0 7px 11px -2px rgba(0, 0, 0, .1), 0 4px 7px -4px rgba(0, 0, 0, .1); }
  .filters { display: flex; align-items: center; gap: 30px; }
  .label { display: flex; align-items: center; gap: 15px; color: #6b7280; }
  .label span { color: #374151; font-weight: 500; }
  .select { position: relative; display: block; height: 62px; }
  .services { width: 224px; }
  .status { width: 209px; }
  select { appearance: none; width: 100%; height: 100%; padding: 0 29px; border: 1px solid #d1d5db; border-radius: 11px; background: #fff; }
  .select svg { position: absolute; right: 7px; top: 26px; width: 18px; height: 12px; fill: none; stroke: #111827; stroke-width: 2; pointer-events: none; }
  .range { display: flex; align-items: center; gap: 14px; color: #4b5563; }
  .range span { font-size: 29px; }
  input { width: 272px; height: 70px; padding: 0 22px; border: 1px solid #d1d5db; border-radius: 11px; background: #fff; color: #111827; }

  .cardhead { display: flex; align-items: center; justify-content: space-between; margin-bottom: 29px; }
  h2 { display: flex; align-items: center; gap: 14px; font-size: 36px; line-height: 50px; font-weight: 600; }
  h2 :global(.icon) { color: #3b82f6; }
  .cardhead p { color: #4b5563; }
  .panel { padding: 29px; border-radius: 14px; background: #fff; box-shadow: 0 9px 8px rgba(0, 0, 0, .07); }
  h3 { font-size: 32px; line-height: 50px; font-weight: 600; }
  .legend { display: flex; gap: 29px; margin-top: 14px; list-style: none; }
  .legend li { display: flex; align-items: center; gap: 14px; }
  .legend i { width: 29px; height: 29px; border-radius: 7px; }
  .purple { background: #a855f7; }
  .blue { background: #3b82f6; }
  .green { background: #22c55e; }
  .toolbar { display: flex; justify-content: space-between; align-items: center; margin: 32px 0 46px; }
  h4 { font-size: 50px; line-height: 60px; font-weight: 700; }
  .btns { display: flex; height: 70px; border-radius: 7px; background: #3b82f6; color: #fff; font-size: 29px; }
  .btns button { padding: 0 19px; }
  .arrows button { width: 82px; display: grid; place-items: center; }
  .arrows svg { width: 16px; height: 28px; fill: none; stroke: #fff; stroke-width: 4; stroke-linecap: round; stroke-linejoin: round; }
  .views { height: 68px; }
  .views .current { border-radius: 7px 0 0 7px; box-shadow: 0 0 0 6px rgba(44, 62, 80, .42); }

  table { width: 100%; table-layout: fixed; border-collapse: collapse; font-size: 29px; line-height: 43px; }
  th, td { border: 1px solid #ddd; padding: 0; }
  th { height: 50px; font-weight: 600; }
  td { height: 152px; vertical-align: top; padding: 0 3px; }
  .num { padding: 8px 4px 9px; text-align: right; }
  .num.other { opacity: .3; }
  .today { background: #eff6ff; }
  .today .num { color: #1d4ed8; font-weight: 700; }
  .event { display: flex; gap: 6px; height: 42px; margin-bottom: 2px; padding: 0 3px; border-radius: 5px; color: #fff; font-size: 24px; line-height: 42px; font-weight: 600; white-space: nowrap; overflow: hidden; }
  .time { flex: none; overflow: hidden; }
  .title { flex: 1; min-width: 0; overflow: hidden; }
  .karaoke { background: #8b5cf6; }
  .n64 { background: #3b82f6; }
  .more { display: block; padding-left: 4px; font-size: 24px; line-height: 32px; color: #6b7280; }

  .track { background: #1f2937; padding-top: 52px; }
  .thumb { height: 362px; border-radius: 7px; background: #ec4899; }
  .shade {
    position: absolute; left: 0; right: 0; bottom: 0; height: 120px; pointer-events: none;
    background: linear-gradient(rgba(0, 0, 0, 0), rgba(0, 0, 0, .04) 50%, rgba(0, 0, 0, .12));
    mask-image: linear-gradient(90deg, transparent, #000 20%, #000 92%, transparent);
  }

  .dock {
    position: relative; justify-self: center; display: flex; align-items: center; gap: 21px; height: 102px;
    margin: 4px 0 10px; padding: 0 14px 6px 13px; border: 2px solid rgba(255, 255, 255, .25); border-radius: 30px;
    background: linear-gradient(90deg, #5a5562, #84667a 6%, #7a6078 8%, #58575c 14%, #58575c 20%, #8b6468 25%, #5c5a64 29%, #5f5c6a 32%, #8b74a0 37%, #b077a6 42%, #c07ba8 49%, #cb7e9c 58%, #d98088 66%, #d97f78 74%, #dc8372 82%, #c07678 87%, #976a84 94%, #966e80);
  }
  .app { position: relative; width: 64px; height: 64px; flex: none; }
  .app svg { display: block; width: 64px; height: 64px; overflow: visible; filter: drop-shadow(0 1px 1px rgba(0, 0, 0, .3)); }
  .on::after { content: ''; position: absolute; left: 28px; top: 74px; width: 8px; height: 8px; border-radius: 50%; background: #1c0210; }
  .badge { position: absolute; right: -11px; top: -9px; min-width: 32px; height: 32px; padding: 0 5px; border-radius: 16px; background: #fb3d33; color: #fff; font-size: 17px; line-height: 32px; text-align: center; }
  .sep { width: 2px; height: 74px; margin: 0 5px 0 9px; background: rgba(60, 0, 20, .45); }
</style>
